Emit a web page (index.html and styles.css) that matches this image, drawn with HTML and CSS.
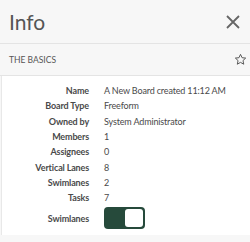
FILE: index.html
```html
<!DOCTYPE html>
<html lang="en">
<head>
    <meta charset="UTF-8">
    <title>Info</title>
    <link rel="stylesheet" href="styles.css">
</head>
<body>
<div class="panel">
    <div class="head">
        <span class="title">Info</span>
        <svg class="close" width="14" height="14" viewBox="0 0 14 14"><path d="M1 1L13 13M13 1L1 13" stroke="#666" stroke-width="1.8" fill="none"/></svg>
    </div>
    <div class="section">
        <span>THE BASICS</span>
        <svg class="star" width="13" height="13" viewBox="0 0 24 24"><path d="M12 2.5l2.9 6.2 6.7.7-5 4.6 1.4 6.7L12 17.3l-5.9 3.4 1.4-6.7-5-4.6 6.7-.7z" stroke="#555" stroke-width="1.8" fill="none" stroke-linejoin="round"/></svg>
    </div>
    <div class="card">
        <div class="row"><span class="label">Name</span><span class="value">A New Board created 11:12 AM</span></div>
        <div class="row"><span class="label">Board Type</span><span class="value">Freeform</span></div>
        <div class="row"><span class="label">Owned by</span><span class="value">System Administrator</span></div>
        <div class="row"><span class="label">Members</span><span class="value">1</span></div>
        <div class="row"><span class="label">Assignees</span><span class="value">0</span></div>
        <div class="row"><span class="label">Vertical Lanes</span><span class="value">8</span></div>
        <div class="row"><span class="label">Swimlanes</span><span class="value">2</span></div>
        <div class="row"><span class="label">Tasks</span><span class="value">7</span></div>
        <div class="row toggle-row"><span class="label">Swimlanes</span><span class="toggle"><span class="knob"></span></span></div>
    </div>
</div>
</body>
</html>
```
FILE: styles.css
```css
* {
    padding: 0;
    margin: 0;
    box-sizing: border-box;
}
body {
    background: #f7f7f7;
    font-family: Lato, "Open Sans", sans-serif;
    color: #333;
}
.panel {
    width: 250px;
    height: 242px;
}
.head {
    height: 44px;
    display: flex;
    align-items: center;
    justify-content: space-between;
    padding: 0 10px 0 9px;
    border-bottom: 1px solid #e4e4e4;
}
.title {
    font-size: 21px;
    color: #555;
}
.section {
    height: 32px;
    display: flex;
    align-items: center;
    justify-content: space-between;
    padding: 0 3px 0 9px;
    border-bottom: 1px solid #e4e4e4;
    font-size: 8.5px;
    color: #555;
}
.card {
    background: #fff;
    border-left: 1px solid #e8e8e8;
    margin-left: 1px;
    height: 159px;
    padding-top: 7px;
}
.row {
    display: flex;
    align-items: center;
    height: 15.3px;
    font-size: 9px;
    letter-spacing: -0.15px;
}
.label {
    width: 87px;
    text-align: right;
    font-weight: bold;
    color: #4a4a4a;
}
.value {
    margin-left: 15px;
    color: #4a4a4a;
}
.toggle-row {
    height: 24px;
    margin-top: 1px;
}
.toggle {
    margin-left: 15px;
    width: 41px;
    height: 22px;
    background: #264a3b;
    border-radius: 4px;
    display: flex;
    justify-content: flex-end;
    padding: 2px;
}
.knob {
    width: 18px;
    height: 18px;
    background: #fff;
    border-radius: 3px;
}
```
